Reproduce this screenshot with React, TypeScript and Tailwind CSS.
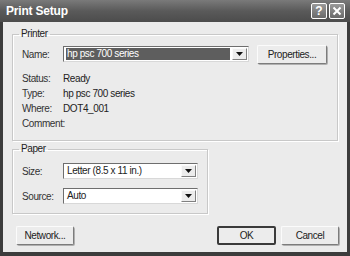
import { ReactNode } from 'react';

const font = { fontFamily: '"Liberation Sans", Arial, sans-serif' };

function Button({ label, wide, primary }: { label: string; wide: string; primary?: boolean }) {
  return (
    <div
      className={`${wide} h-[19px] flex items-center justify-center bg-[#ececec] text-[10px] tracking-[-0.4px] text-[#222] rounded-[2px] ${
        primary
          ? 'border-2 border-[#3a3a3a]'
          : 'border border-t-[#fbfbfb] border-l-[#fbfbfb] border-r-[#7c7c7c] border-b-[#7c7c7c] shadow-[1px_1px_0_#b0b0b0]'
      }`}
    >
      {label}
    </div>
  );
}

function Combo({ value, w, selected }: { value: string; w: string; selected?: boolean }) {
  return (
    <div
      className={`${w} h-[16px] flex items-center bg-white border border-t-[#6e6e6e] border-l-[#6e6e6e] border-r-[#d8d8d8] border-b-[#d8d8d8] pl-[2px] pr-[1px]`}
    >
      <div className="flex-1 min-w-0 flex items-center">
        <span
          className={`text-[10px] leading-[12px] tracking-[-0.4px] px-[1px] ${
            selected ? 'bg-[#5e5e5e] text-white w-full' : 'text-[#222]'
          }`}
        >
          {value}
        </span>
      </div>
      <div className="w-[15px] h-[12px] ml-[2px] bg-[#ececec] border border-t-[#fafafa] border-l-[#fafafa] border-r-[#808080] border-b-[#808080] flex items-center justify-center">
        <svg width="7" height="4" viewBox="0 0 7 4">
          <path d="M0 0h7L3.5 4z" fill="#111" />
        </svg>
      </div>
    </div>
  );
}

function Label({ children }: { children: ReactNode }) {
  return <span className="w-[41px] pl-[9px] box-content text-[10px] tracking-[-0.4px] text-[#333]">{children}</span>;
}

function Row({ label, children }: { label: string; children: ReactNode }) {
  return (
    <div className="flex items-center h-[15px]">
      <Label>{label}</Label>
      <span className="text-[10px] tracking-[-0.4px] text-[#222]">{children}</span>
    </div>
  );
}

function Group({ title, w, children }: { title: string; w: string; children: ReactNode }) {
  return (
    <fieldset className={`${w} border border-[#c8c8c8] shadow-[inset_1px_1px_0_#fff,1px_1px_0_#fff]`}>
      <legend className="ml-[6px] px-[2px] text-[10px] leading-[12px] tracking-[-0.4px] text-[#222]">{title}</legend>
      {children}
    </fieldset>
  );
}

export default function App() {
  return (
    <div className="w-[350px] h-[256px] bg-[#3c3c3c] px-[3px] pb-[4px] flex flex-col" style={font}>
      {/* Title bar */}
      <div className="h-[22px] -mx-[3px] px-[6px] flex items-center justify-between bg-gradient-to-b from-[#7a7a7a] via-[#5a5a5a] to-[#4c4c4c]">
        <span className="text-white font-bold text-[12px] tracking-[-0.2px]">Print Setup</span>
        <div className="flex gap-[2px] mr-[-1px]">
          <div className="w-[16px] h-[16px] rounded-[2px] border border-white bg-gradient-to-b from-[#9a9a9a] to-[#6a6a6a] flex items-center justify-center text-white font-bold text-[12px] leading-none">
            ?
          </div>
          <div className="w-[16px] h-[16px] rounded-[2px] border border-white bg-gradient-to-b from-[#9a9a9a] to-[#6a6a6a] flex items-center justify-center">
            <svg width="10" height="10" viewBox="0 0 10 10">
              <path d="M1.5 1.5l7 7M8.5 1.5l-7 7" stroke="#fff" strokeWidth="2" />
            </svg>
          </div>
        </div>
      </div>

      {/* Body */}
      <div className="flex-1 bg-[#ebebeb] pl-[9px] pt-[6px] flex flex-col">
        <Group title="Printer" w="w-[326px]">
          <div className="pt-[5px] pb-[9px]">
            <div className="flex items-center h-[18px]">
              <Label>Name:</Label>
              <Combo value="hp psc 700 series" w="w-[186px]" selected />
              <div className="ml-[8px]">
                <Button label="Properties..." wide="w-[70px]" />
              </div>
            </div>
            <div className="mt-[8px]">
              <Row label="Status:">Ready</Row>
              <Row label="Type:">hp psc 700 series</Row>
              <Row label="Where:">DOT4_001</Row>
              <Row label="Comment:">{''}</Row>
            </div>
          </div>
        </Group>

        <div className="mt-[2px]">
          <Group title="Paper" w="w-[196px]">
            <div className="pt-[8px] pb-[9px] flex flex-col gap-[9px]">
              <div className="flex items-center h-[16px]">
                <Label>Size:</Label>
                <Combo value="Letter (8.5 x 11 in.)" w="w-[135px]" />
              </div>
              <div className="flex items-center h-[16px]">
                <Label>Source:</Label>
                <Combo value="Auto" w="w-[135px]" />
              </div>
            </div>
          </Group>
        </div>

        <div className="mt-[12px] flex items-center">
          <div className="ml-[4px]">
            <Button label="Network..." wide="w-[58px]" />
          </div>
          <div className="ml-auto mr-[8px] flex gap-[5px]">
            <Button label="OK" wide="w-[59px]" primary />
            <Button label="Cancel" wide="w-[58px]" />
          </div>
        </div>
      </div>
    </div>
  );
}
